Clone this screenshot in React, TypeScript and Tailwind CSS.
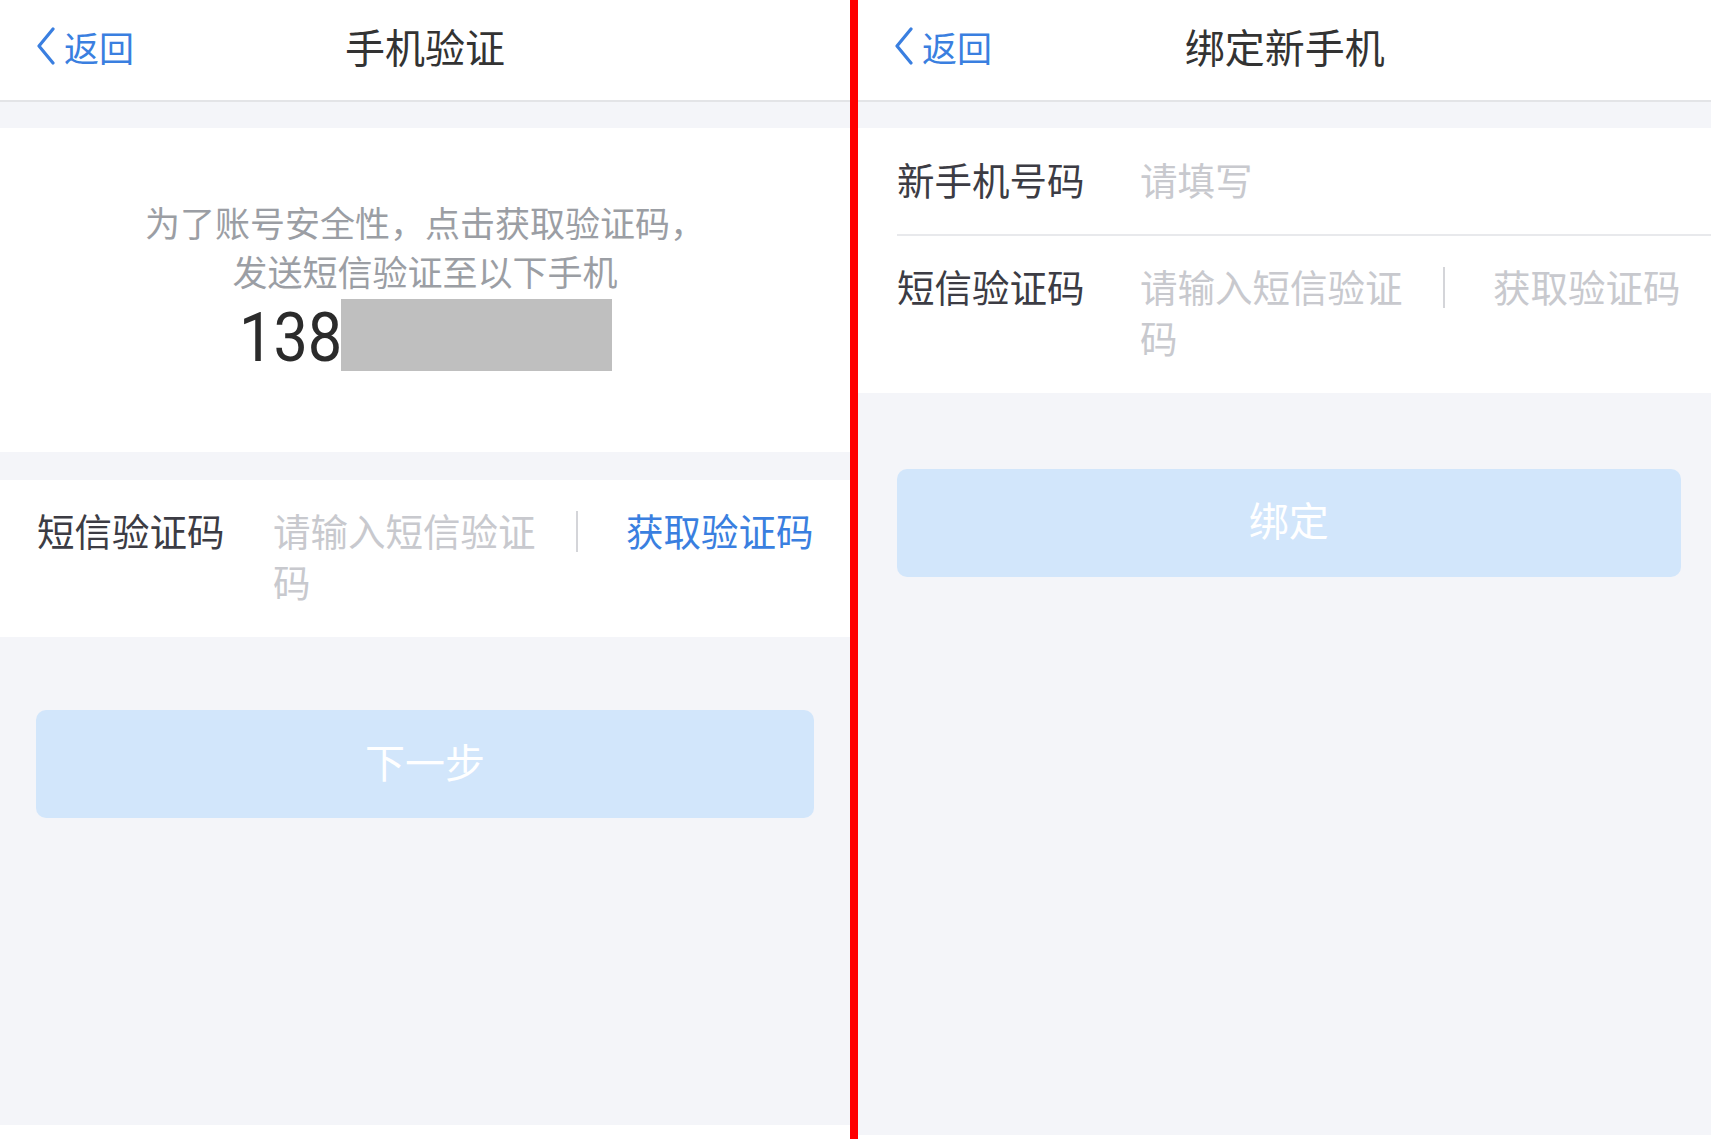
import React from "react";

const font = "font-['Noto_Sans_CJK_SC','Noto_Sans',sans-serif]";

function Back() {
  return (
    <div className="flex items-center gap-[8px] text-[#3a7fe0]">
      <svg width="20" height="38" viewBox="0 0 20 38" fill="none">
        <path d="M17 2 L3 19 L17 36" stroke="#3a7fe0" strokeWidth="3.2" strokeLinecap="round" strokeLinejoin="round" />
      </svg>
      <span className="text-[35px] leading-none">返回</span>
    </div>
  );
}

function Header({ title }: { title: string }) {
  return (
    <div className="grid h-[102px] grid-cols-[1fr_auto_1fr] items-center border-b-2 border-[#e3e4e7] bg-white pb-[8px]">
      <div className="pl-[36px]">
        <Back />
      </div>
      <h1 className="text-[40px] leading-none text-[#333]">{title}</h1>
      <div />
    </div>
  );
}

function CodeRow({ labelW, active }: { labelW: string; active: boolean }) {
  return (
    <div className="flex items-start text-[37.5px] leading-[51px]">
      <span className={`${labelW} shrink-0 whitespace-nowrap text-[#3c3c44]`}>短信验证码</span>
      <span className="mr-[30px] w-[273px] shrink-0 text-[#c8c9ce]">请输入短信验证码</span>
      <span className="mt-[7px] h-[41px] w-[2px] shrink-0 bg-[#d4d5d9]" />
      <span className={`ml-[48px] whitespace-nowrap ${active ? "text-[#3a7fe0]" : "text-[#c8c9ce]"}`}>获取验证码</span>
    </div>
  );
}

function Verify() {
  return (
    <div className="flex h-[1139px] w-[850px] flex-col bg-white">
      <Header title="手机验证" />
      <div className="flex h-[1023px] flex-col bg-[#f4f5f9] pt-[26px]">
        <div className="flex h-[324px] flex-col items-center bg-white pt-[69px]">
          <p className="text-center text-[35px] leading-[49px] text-[#9b9ea4]">
            为了账号安全性，点击获取验证码，
            <br />
            发送短信验证至以下手机
          </p>
          <div className="mt-[4px] flex h-[72px] items-center">
            <span className="w-[102px] pt-[6px] font-['Roboto',sans-serif] text-[68px] leading-none text-[#2b2b2b]">
              <span className="inline-block origin-left scale-x-[0.9]">138</span>
            </span>
            <span className="h-[72px] w-[271px] bg-[#bfbfbf]" />
          </div>
        </div>
        <div className="mt-[28px] bg-white px-[37px] pb-[31px] pt-[24px]">
          <CodeRow labelW="w-[236px]" active />
        </div>
        <div className="mx-[36px] mt-[73px] flex h-[108px] items-center justify-center rounded-[10px] bg-[#d2e6fb] pb-[6px] text-[40px] text-white">
          下一步
        </div>
      </div>
    </div>
  );
}

function Bind() {
  return (
    <div className="flex h-[1139px] flex-1 flex-col bg-white">
      <Header title="绑定新手机" />
      <div className="flex h-[1033px] flex-col bg-[#f4f5f9] pt-[26px]">
        <div className="bg-white pl-[39px]">
          <div className="flex border-b-2 border-[#e8e9ec] pb-[30px] pt-[25px] text-[37.5px] leading-[51px]">
            <span className="w-[243px] shrink-0 text-[#3c3c44]">新手机号码</span>
            <span className="text-[#c8c9ce]">请填写</span>
          </div>
          <div className="pb-[31px] pr-[31px] pt-[24px]">
            <CodeRow labelW="w-[243px]" active={false} />
          </div>
        </div>
        <div className="ml-[39px] mr-[31px] mt-[76px] flex h-[108px] items-center justify-center rounded-[10px] bg-[#d2e6fb] pb-[8px] text-[40px] text-white">
          绑定
        </div>
      </div>
    </div>
  );
}

export default function App() {
  return (
    <div className={`flex h-[1139px] w-[1711px] overflow-hidden bg-white ${font}`}>
      <Verify />
      <div className="h-full w-[8px] shrink-0 bg-[#ff0000]" />
      <Bind />
    </div>
  );
}
